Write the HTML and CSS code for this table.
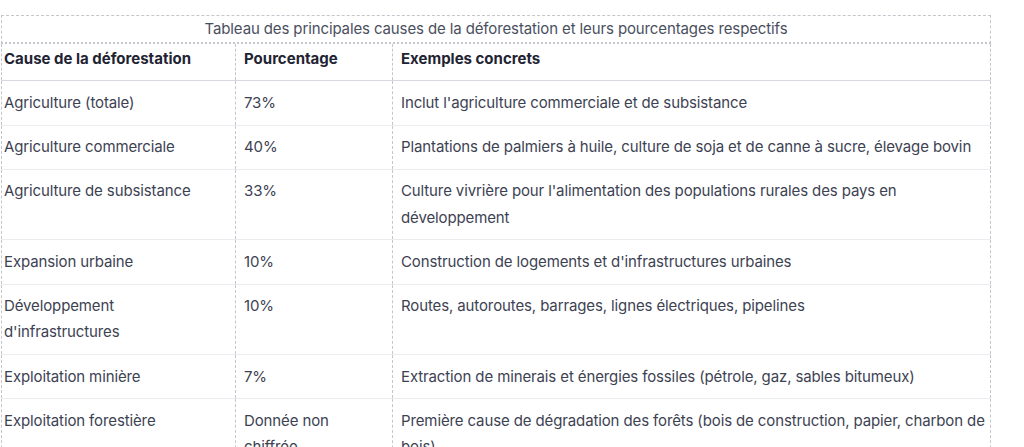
FILE: index.html
```html
<!DOCTYPE html>
<html lang="fr">
<head>
<meta charset="utf-8">
<title>Causes de la déforestation</title>
<link rel="stylesheet" href="styles.css">
</head>
<body>
<div class="wrap">
  <table class="causes">
    <caption>Tableau des principales causes de la déforestation et leurs pourcentages respectifs</caption>
    <thead>
      <tr>
        <th class="c1">Cause de la déforestation</th>
        <th class="c2">Pourcentage</th>
        <th class="c3">Exemples concrets</th>
      </tr>
    </thead>
    <tbody>
      <tr><td>Agriculture (totale)</td><td>73%</td><td>Inclut l'agriculture commerciale et de subsistance</td></tr>
      <tr><td>Agriculture commerciale</td><td>40%</td><td>Plantations de palmiers à huile, culture de soja et de canne à sucre, élevage bovin</td></tr>
      <tr><td>Agriculture de subsistance</td><td>33%</td><td>Culture vivrière pour l'alimentation des populations rurales des pays en développement</td></tr>
      <tr><td>Expansion urbaine</td><td>10%</td><td>Construction de logements et d'infrastructures urbaines</td></tr>
      <tr><td>Développement d'infrastructures</td><td>10%</td><td>Routes, autoroutes, barrages, lignes électriques, pipelines</td></tr>
      <tr><td>Exploitation minière</td><td>7%</td><td>Extraction de minerais et énergies fossiles (pétrole, gaz, sables bitumeux)</td></tr>
      <tr><td>Exploitation forestière</td><td>Donnée non chiffrée</td><td>Première cause de dégradation des forêts (bois de construction, papier, charbon de bois)</td></tr>
    </tbody>
  </table>
</div>
</body>
</html>
```

FILE: styles.css
```css
html, body {
  margin: 0;
  padding: 0;
  background: #ffffff;
}

body {
  font-family: Inter, "Open Sans", sans-serif;
  color: #3d4252;
  font-size: 15px;
  letter-spacing: -0.12px;
}

.wrap {
  padding: 15px 0 0 1px;
}

.causes {
  width: 990px;
  border-collapse: collapse;
  table-layout: fixed;
}

.causes caption {
  border: 1px dashed #c4c6cc;
  border-bottom: 2px dotted #c4c6cc;
  line-height: 26px;
  font-size: 15px;
  color: #4a4f5e;
  text-align: center;
}

.causes th,
.causes td {
  text-align: left;
  vertical-align: top;
  border-left: 1px dashed #c4c6cc;
  border-right: 1px dashed #c4c6cc;
  padding: 8.5px 8px;
  line-height: 26.25px;
}

.causes th {
  font-weight: 700;
  color: #1f2433;
  letter-spacing: 0;
  padding: 2px 8px 8px;
  border-bottom: 1px solid #d6d9e1;
}

.causes td {
  border-bottom: 1px solid #ebecef;
}

.causes th:first-child,
.causes td:first-child {
  padding-left: 2px;
}

.causes th:last-child,
.causes td:last-child {
  padding-right: 1px;
}

.c1 { width: 223px; }
.c2 { width: 140px; }
```
